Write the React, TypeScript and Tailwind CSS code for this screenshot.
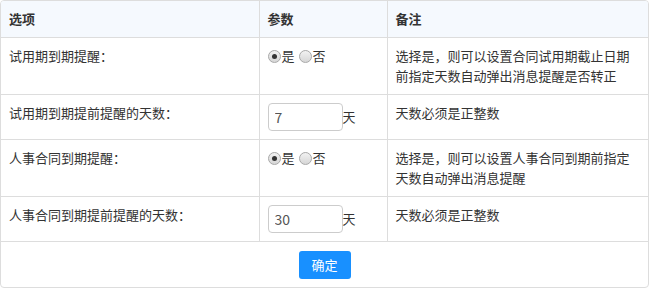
import React from 'react';

type Row = {
    label: string;
    kind: 'radio' | 'days';
    value?: string;
    note: string[];
};

const rows: Row[] = [
    { label: '试用期到期提醒：', kind: 'radio', note: ['选择是，则可以设置合同试用期截止日期', '前指定天数自动弹出消息提醒是否转正'] },
    { label: '试用期到期提前提醒的天数：', kind: 'days', value: '7', note: ['天数必须是正整数'] },
    { label: '人事合同到期提醒：', kind: 'radio', note: ['选择是，则可以设置人事合同到期前指定', '天数自动弹出消息提醒'] },
    { label: '人事合同到期提前提醒的天数：', kind: 'days', value: '30', note: ['天数必须是正整数'] },
];

const Radio: React.FC<{ checked?: boolean }> = ({ checked }) => (
    <span className="inline-flex w-[13px] h-[13px] rounded-full border border-[#a9a9a9] bg-gradient-to-b from-[#f2f2f2] to-[#d6d6d6] items-center justify-center">
        {checked && <span className="w-[5px] h-[5px] rounded-full bg-[#333]" />}
    </span>
);

const App: React.FC = () => {
    return (
        <div className="w-[652px] h-[289px] bg-white text-[13px] leading-5 text-[#333] font-['Microsoft_YaHei','Noto_Sans_CJK_SC',sans-serif]">
            <div className="w-[649px] border border-[#dddddd] rounded-[4px] overflow-hidden">
                <table className="w-full border-collapse table-fixed">
                    <colgroup>
                        <col className="w-[258px]" />
                        <col className="w-[128px]" />
                        <col />
                    </colgroup>
                    <thead>
                        <tr className="bg-[#f5f9fe]">
                            <th className="text-left font-bold px-2 py-2 border-b border-[#dddddd]">选项</th>
                            <th className="text-left font-bold px-2 py-2 border-b border-l border-[#dddddd]">参数</th>
                            <th className="text-left font-bold px-2 py-2 border-b border-l border-[#dddddd]">备注</th>
                        </tr>
                    </thead>
                    <tbody>
                        {rows.map((r) => (
                            <tr key={r.label}>
                                <td className="align-top px-2 py-2 border-b border-[#dddddd]">{r.label}</td>
                                <td className="align-top px-2 py-2 border-b border-l border-[#dddddd]">
                                    {r.kind === 'radio' ? (
                                        <div className="flex items-center h-5">
                                            <Radio checked />
                                            <span className="ml-[1px]">是</span>
                                            <span className="ml-[4px] flex items-center"><Radio /></span>
                                            <span className="ml-[1px]">否</span>
                                        </div>
                                    ) : (
                                        <div className="flex items-center">
                                            <input
                                                defaultValue={r.value}
                                                className="w-[75px] h-[28px] border border-[#cccccc] rounded-[4px] px-[6px] text-[14px] text-[#555] outline-none"
                                            />
                                            <span>天</span>
                                        </div>
                                    )}
                                </td>
                                <td className="align-top px-2 py-2 border-b border-l border-[#dddddd]">
                                    {r.note.map((n) => (
                                        <div key={n}>{n}</div>
                                    ))}
                                </td>
                            </tr>
                        ))}
                    </tbody>
                </table>
                <div className="flex justify-center py-2 h-[45px] items-center">
                    <button className="w-[52px] h-[28px] bg-[#1890ff] text-white rounded-[3px] text-[13px]">确定</button>
                </div>
            </div>
        </div>
    );
};

export default App;
